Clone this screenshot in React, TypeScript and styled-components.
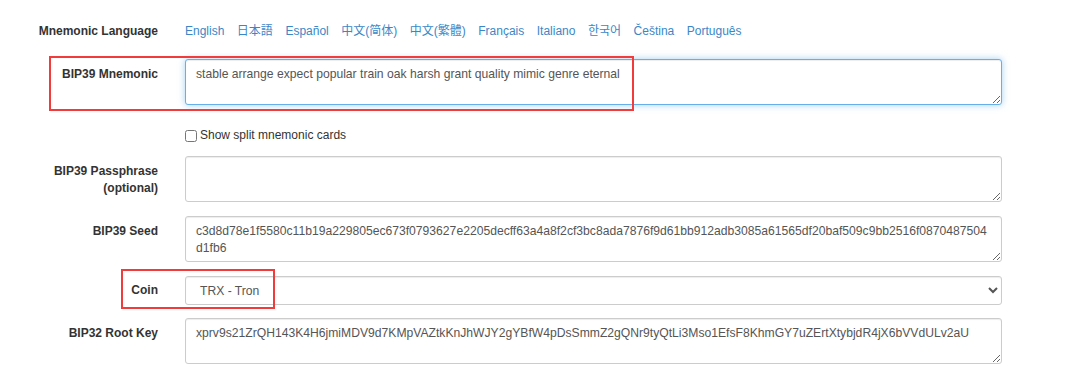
import styled, { createGlobalStyle } from 'styled-components'

const languages = [
  'English',
  '日本語',
  'Español',
  '中文(简体)',
  '中文(繁體)',
  'Français',
  'Italiano',
  '한국어',
  'Čeština',
  'Português',
]

export default function App() {
  return (
    <>
      <GlobalStyle />
      <Page>
        <FormRow gapAfter={19}>
          <Label>Mnemonic Language</Label>
          <LanguageList>
            {languages.map((lang) => (
              <LangLink key={lang} href="#">
                {lang}
              </LangLink>
            ))}
          </LanguageList>
        </FormRow>

        <FormRow gapAfter={22}>
          <Label padTop={7}>BIP39 Mnemonic</Label>
          <TextArea
            focused
            spellCheck={false}
            defaultValue="stable arrange expect popular train oak harsh grant quality mimic genre eternal"
          />
        </FormRow>

        <FormRow gapAfter={12}>
          <span />
          <CheckLabel>
            <CheckBox type="checkbox" />
            Show split mnemonic cards
          </CheckLabel>
        </FormRow>

        <FormRow gapAfter={14}>
          <Label padTop={7}>BIP39 Passphrase (optional)</Label>
          <TextArea spellCheck={false} defaultValue="" />
        </FormRow>

        <FormRow gapAfter={14}>
          <Label padTop={7}>BIP39 Seed</Label>
          <TextArea
            spellCheck={false}
            defaultValue="c3d8d78e1f5580c11b19a229805ec673f0793627e2205decff63a4a8f2cf3bc8ada7876f9d61bb912adb3085a61565df20baf509c9bb2516f0870487504d1fb6"
          />
        </FormRow>

        <FormRow gapAfter={13}>
          <Label padTop={6}>Coin</Label>
          <Select defaultValue="trx">
            <option value="trx">TRX - Tron</option>
          </Select>
        </FormRow>

        <FormRow gapAfter={0}>
          <Label padTop={7}>BIP32 Root Key</Label>
          <TextArea
            spellCheck={false}
            defaultValue="xprv9s21ZrQH143K4H6jmiMDV9d7KMpVAZtkKnJhWJY2gYBfW4pDsSmmZ2gQNr9tyQtLi3Mso1EfsF8KhmGY7uZErtXtybjdR4jX6bVVdULv2aU"
          />
        </FormRow>

        <Highlight style={{ left: 49, top: 56, width: 585, height: 55 }} />
        <Highlight style={{ left: 121, top: 269, width: 154, height: 40 }} />
      </Page>
    </>
  )
}

const GlobalStyle = createGlobalStyle`
  html, body {
    margin: 0;
    padding: 0;
    background: #fff;
  }
  body {
    font-family: "Liberation Sans", Arial, "Noto Sans CJK SC", sans-serif;
    font-size: 12px;
    line-height: 17px;
    color: #333;
  }
  * {
    box-sizing: border-box;
  }
`

const Page = styled.div`
  position: relative;
  width: 1080px;
  height: 374px;
  overflow: hidden;
  padding: 23px 78px 0 0;
`

const FormRow = styled.div<{ gapAfter: number }>`
  display: grid;
  grid-template-columns: 158px 1fr;
  column-gap: 27px;
  align-items: start;
  margin-bottom: ${({ gapAfter }) => gapAfter + 'px'};
`

const Label = styled.label<{ padTop?: number }>`
  display: block;
  padding-left: 30px;
  padding-top: ${({ padTop }) => (padTop || 0) + 'px'};
  text-align: right;
  font-weight: bold;
  line-height: 17px;
  color: #333;
`

const LanguageList = styled.div`
  display: flex;
  flex-wrap: wrap;
  gap: 12.5px;
  line-height: 17px;
`

const LangLink = styled.a`
  color: #3a87c8;
  text-decoration: none;
  font-family: "Liberation Sans", Arial, "Noto Sans CJK JP", "Noto Sans CJK KR", sans-serif;
`

const TextArea = styled.textarea<{ focused?: boolean }>`
  display: block;
  width: 100%;
  height: 46px;
  padding: 6px 10px 4px;
  font-family: "Liberation Sans", Arial, sans-serif;
  font-size: 12.15px;
  line-height: 17px;
  color: #555;
  background: #fff;
  border: 1px solid ${({ focused }) => (focused ? '#66afe9' : '#ccc')};
  border-radius: 3px;
  box-shadow: ${({ focused }) =>
    focused
      ? 'inset 0 1px 1px rgba(0,0,0,.075), 0 0 7px rgba(102,175,233,.6)'
      : 'inset 0 1px 1px rgba(0,0,0,.075)'};
  outline: none;
  resize: vertical;
  word-break: break-all;
`

const Select = styled.select`
  display: block;
  width: 100%;
  height: 29px;
  padding: 4px 10px;
  font-family: "Liberation Sans", Arial, sans-serif;
  font-size: 12.15px;
  color: #555;
  background: #fff;
  border: 1px solid #ccc;
  border-radius: 3px;
  box-shadow: inset 0 1px 1px rgba(0,0,0,.075);
  outline: none;
`

const CheckLabel = styled.label`
  display: flex;
  align-items: center;
  color: #333;
  line-height: 17px;
`

const CheckBox = styled.input`
  width: 12px;
  height: 12px;
  margin: 0 3px 0 0;
`

const Highlight = styled.div`
  position: absolute;
  border: 2px solid #f23b3b;
  pointer-events: none;
`
